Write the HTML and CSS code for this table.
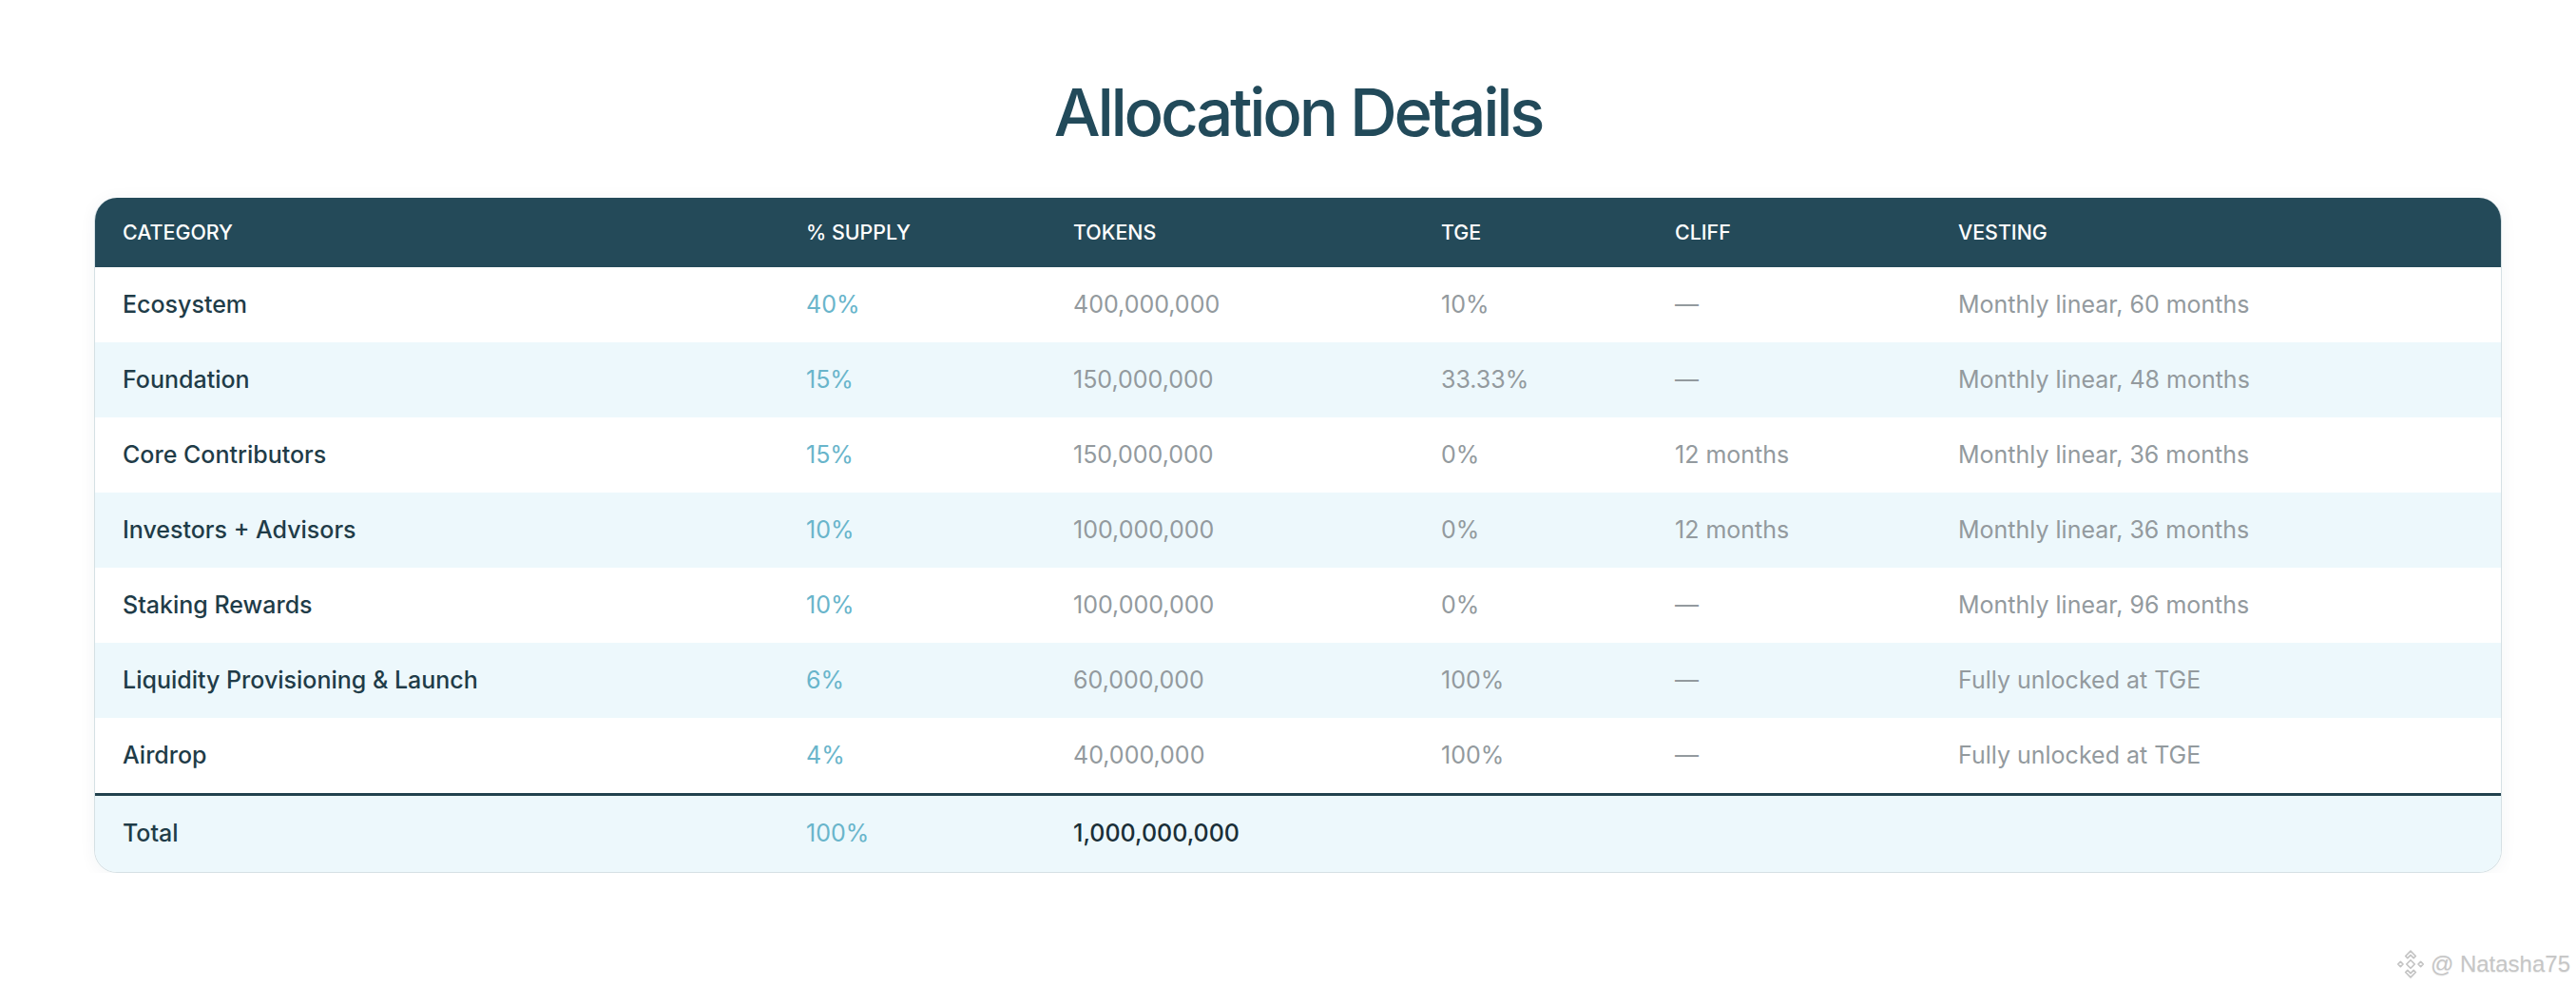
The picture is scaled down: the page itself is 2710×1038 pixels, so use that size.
FILE: index.html
```html
<!DOCTYPE html>
<html lang="en">
<head>
<meta charset="utf-8">
<title>Allocation Details</title>
<link rel="stylesheet" href="styles.css">
</head>
<body>
<main class="page">
  <h1 class="title">Allocation Details</h1>
  <div class="card">
    <table class="alloc">
      <colgroup>
        <col class="c-cat"><col class="c-sup"><col class="c-tok"><col class="c-tge"><col class="c-cliff"><col class="c-vest">
      </colgroup>
      <thead>
        <tr><th>Category</th><th>% Supply</th><th>Tokens</th><th>TGE</th><th>Cliff</th><th>Vesting</th></tr>
      </thead>
      <tbody>
        <tr><td class="cat">Ecosystem</td><td class="sup">40%</td><td>400,000,000</td><td>10%</td><td>—</td><td>Monthly linear, 60 months</td></tr>
        <tr><td class="cat">Foundation</td><td class="sup">15%</td><td>150,000,000</td><td>33.33%</td><td>—</td><td>Monthly linear, 48 months</td></tr>
        <tr><td class="cat">Core Contributors</td><td class="sup">15%</td><td>150,000,000</td><td>0%</td><td>12 months</td><td>Monthly linear, 36 months</td></tr>
        <tr><td class="cat">Investors + Advisors</td><td class="sup">10%</td><td>100,000,000</td><td>0%</td><td>12 months</td><td>Monthly linear, 36 months</td></tr>
        <tr><td class="cat">Staking Rewards</td><td class="sup">10%</td><td>100,000,000</td><td>0%</td><td>—</td><td>Monthly linear, 96 months</td></tr>
        <tr><td class="cat">Liquidity Provisioning &amp; Launch</td><td class="sup">6%</td><td>60,000,000</td><td>100%</td><td>—</td><td>Fully unlocked at TGE</td></tr>
        <tr><td class="cat">Airdrop</td><td class="sup">4%</td><td>40,000,000</td><td>100%</td><td>—</td><td>Fully unlocked at TGE</td></tr>
      </tbody>
      <tfoot>
        <tr><td class="cat">Total</td><td class="sup">100%</td><td class="strong">1,000,000,000</td><td></td><td></td><td></td></tr>
      </tfoot>
    </table>
  </div>
</main>
<div class="watermark">
  <svg class="wm-logo" viewBox="0 0 32 32" width="34" height="34" fill="none" stroke="#c4c4c4" stroke-width="1.6" stroke-linejoin="round">
    <path d="M16 3 L21 8 L19 10 L16 7 L13 10 L11 8 Z"/>
    <path d="M16 29 L21 24 L19 22 L16 25 L13 22 L11 24 Z"/>
    <path d="M16 12 L20 16 L16 20 L12 16 Z"/>
    <path d="M6 13.5 L8.5 16 L6 18.5 L3.5 16 Z"/>
    <path d="M26 13.5 L28.5 16 L26 18.5 L23.5 16 Z"/>
  </svg>
  <span>@ Natasha75</span>
</div>
</body>
</html>
```
FILE: styles.css
```css
html, body {
  margin: 0;
  padding: 0;
  background: #ffffff;
}

body {
  font-family: Inter, "Noto Sans", "Liberation Sans", sans-serif;
  color: #1f3d4a;
}

.page {
  width: 2533px;
  margin-left: 99px;
  padding-top: 76px;
}

.title {
  margin: 0 0 48px;
  text-align: center;
  font-size: 69px;
  font-weight: 500;
  line-height: 84px;
  letter-spacing: -3.3px;
  color: #224a5a;
}

.card {
  border: 1px solid #d5e0e4;
  border-top: none;
  border-radius: 24px;
  overflow: hidden;
  box-shadow: 0 2px 18px rgba(30, 60, 80, 0.05);
}

.alloc {
  width: 100%;
  border-collapse: collapse;
  table-layout: fixed;
}

.c-cat { width: 719px; }
.c-sup { width: 281px; }
.c-tok { width: 387px; }
.c-tge { width: 246px; }
.c-cliff { width: 298px; }
.c-vest { width: auto; }

.alloc th {
  background: #244a59;
  color: #ffffff;
  text-align: left;
  text-transform: uppercase;
  font-size: 21.4px;
  font-weight: 500;
  line-height: 26px;
  padding: 23px 0 24px 29px;
  letter-spacing: 0;
}

.alloc td {
  font-size: 25px;
  line-height: 31px;
  padding: 24px 0 24px 29px;
  color: #939a9e;
  font-weight: 400;
  white-space: nowrap;
}

.alloc tbody tr:nth-child(even) td {
  background: #edf8fc;
}

.alloc td.cat {
  color: #1f3c48;
  font-weight: 500;
}

.alloc td.sup {
  color: #69b5cb;
}

.alloc td.strong {
  color: #1a2f38;
  font-weight: 500;
}

.alloc tfoot td {
  background: #edf8fc;
  border-top: 3px solid #22424e;
  padding-top: 24px;
  padding-bottom: 25px;
}

.watermark {
  position: absolute;
  right: 6px;
  top: 997px;
  display: flex;
  align-items: center;
  gap: 4px;
  font-family: "Liberation Sans", Arial, sans-serif;
  font-size: 24px;
  color: #c6c6c6;
  text-shadow: 0 1px 1px rgba(0, 0, 0, 0.08);
}

.wm-logo {
  display: block;
}
```
